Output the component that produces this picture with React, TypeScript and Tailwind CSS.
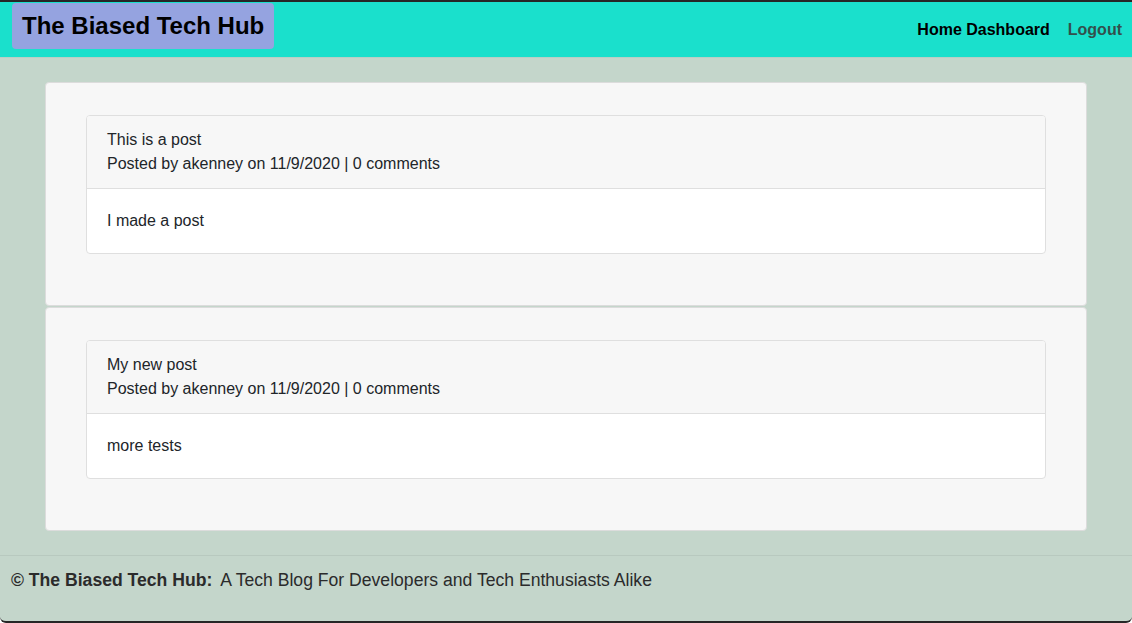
import React from "react";

const posts = [
  { title: "This is a post", author: "akenney", date: "11/9/2020", comments: 0, body: "I made a post" },
  { title: "My new post", author: "akenney", date: "11/9/2020", comments: 0, body: "more tests" },
];

const App = () => {
  return (
    <div
      className="w-[1132px] h-[623px] overflow-hidden flex flex-col bg-[#c4d6cb] border-t-2 border-b-2 border-[#262626] rounded-b-[6px] text-[#212529]"
      style={{ fontFamily: '"Liberation Sans", Arial, sans-serif' }}
    >
      <header className="h-[56px] bg-[#1ae0cc] flex justify-between items-start border-b border-[#b9cfc6]">
        <h1 className="ml-[12px] mt-[1px] h-[46px] px-[10px] flex items-center bg-[#95a3e0] rounded-[4px] text-[24px] font-bold text-black leading-none">
          The Biased Tech Hub
        </h1>
        <nav className="flex items-center gap-[18px] mr-[10px] h-[56px] text-[16px] font-bold">
          <a className="text-black" href="#">
            Home Dashboard
          </a>
          <a className="text-[#33504c]" href="#">
            Logout
          </a>
        </nav>
      </header>

      <main className="mt-[24px] mx-[45px] flex flex-col gap-[1px]">
        {posts.map((post) => (
          <div
            key={post.title}
            className="bg-[#f7f7f7] border border-[#dcdcdc] rounded-[4px] pt-[32px] px-[40px] pb-[51px]"
          >
            <div className="border border-[#dfdfdf] rounded-[4px] bg-white overflow-hidden text-[16px] leading-[24px]">
              <div className="bg-[#f7f7f7] px-[20px] py-[12px] border-b border-[#dfdfdf]">
                <p>{post.title}</p>
                <p>
                  Posted by {post.author} on {post.date} | {post.comments} comments
                </p>
              </div>
              <div className="px-[20px] py-[20px]">
                <p>{post.body}</p>
              </div>
            </div>
          </div>
        ))}
      </main>

      <footer className="mt-[24px] border-t border-[#b8c9bf] pt-[11px] px-[11px] text-[17.6px] leading-[26px] text-[#2b2b2b]">
        <span className="font-bold">© The Biased Tech Hub:</span>
        <span className="ml-[8px]">A Tech Blog For Developers and Tech Enthusiasts Alike</span>
      </footer>
    </div>
  );
};

export default App;
